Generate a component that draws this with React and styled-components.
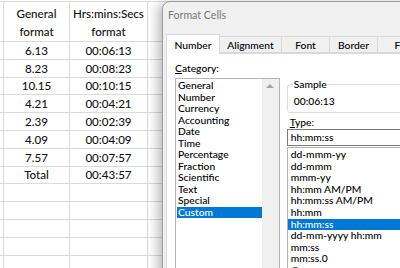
import React from "react";
import styled, { createGlobalStyle } from "styled-components";

const GlobalStyle = createGlobalStyle`
  html, body {
    margin: 0;
    padding: 0;
    background: #ffffff;
  }
  body {
    width: 400px;
    height: 268px;
    overflow: hidden;
  }
`;

const Stage = styled.div`
  position: relative;
  width: 400px;
  height: 268px;
  overflow: hidden;
  background: #ffffff;
`;

const Sheet = styled.div`
  display: grid;
  grid-template-columns: 4px 66px 78px 1fr;
  grid-template-rows: 40px repeat(13, 17.8px);
  margin-top: 1px;
  border-top: 1px solid #dadada;
  font-family: Lato, "Liberation Sans", sans-serif;
  font-size: 11.6px;
  font-weight: 500;
  color: #111;
`;

const Cell = styled.div`
  box-sizing: border-box;
  border-right: 1px solid #dadada;
  border-bottom: 1px solid #dadada;
  display: flex;
  align-items: ${(p) => (p.$header ? "flex-end" : "center")};
  justify-content: center;
  text-align: center;
  line-height: ${(p) => (p.$header ? "18px" : "normal")};
  white-space: nowrap;
`;

const Dialog = styled.div`
  position: absolute;
  left: 162px;
  top: 1px;
  width: 260px;
  height: 290px;
  box-sizing: border-box;
  border: 1px solid #9c9c9c;
  border-radius: 8px 0 0 0;
  background: #f0f0f0;
  box-shadow: -4px 2px 12px rgba(0, 0, 0, 0.28);
  display: flex;
  flex-direction: column;
  font-family: Lato, "Liberation Sans", sans-serif;
  font-weight: 500;
  color: #000;
`;

const TitleBar = styled.div`
  height: 32px;
  box-sizing: border-box;
  padding: 5px 0 0 5px;
  font-size: 10.6px;
  line-height: 16px;
  color: #777;
  font-weight: 400;
`;

const Tabs = styled.div`
  display: flex;
  align-items: flex-end;
  height: 19px;
  padding-left: 3px;
  position: relative;
  z-index: 1;
`;

const Tab = styled.div`
  box-sizing: border-box;
  flex: none;
  width: ${(p) => p.$w}px;
  height: ${(p) => (p.$active ? "20px" : "17px")};
  margin-bottom: ${(p) => (p.$active ? "-1px" : "0")};
  display: flex;
  align-items: center;
  justify-content: center;
  font-size: 10.3px;
  white-space: nowrap;
  background: ${(p) => (p.$active ? "#ffffff" : "#f0f0f0")};
  border: 1px solid #d9d9d9;
  border-bottom: ${(p) => (p.$active ? "none" : "1px solid #d9d9d9")};
  margin-left: ${(p) => (p.$first ? "0" : "-1px")};
`;

const Panel = styled.div`
  flex: 1;
  margin-left: 3px;
  border: 1px solid #d9d9d9;
  background: #ffffff;
  display: flex;
  gap: 7px;
  padding: 7px 0 0 8px;
  font-size: 10.3px;
`;

const CategoryCol = styled.div`
  width: 110px;
  display: flex;
  flex-direction: column;
`;

const TypeCol = styled.div`
  width: 140px;
  display: flex;
  flex-direction: column;
`;

const Label = styled.div`
  line-height: 14px;
  margin-top: ${(p) => p.$top || 0}px;
  margin-bottom: ${(p) => p.$gap || 0}px;
  padding-left: ${(p) => p.$indent || 0}px;
`;

const ListBox = styled.div`
  display: flex;
  height: 200px;
  box-sizing: border-box;
  border: 1px solid #b4b4b4;
  padding: 0 0 0 1px;
`;

const Items = styled.div`
  flex: 1;
  padding-top: 1px;
`;

const Item = styled.div`
  height: ${(p) => p.$h}px;
  line-height: ${(p) => p.$h}px;
  padding-left: ${(p) => p.$pad}px;
  white-space: nowrap;
  background: ${(p) => (p.$selected ? "#0078d7" : "transparent")};
  color: ${(p) => (p.$selected ? "#ffffff" : "#000")};
`;

const ScrollBar = styled.div`
  width: 17px;
  background: #f0f0f0;
  display: flex;
  justify-content: center;
  padding-top: 5px;
  box-sizing: border-box;
`;

const UpArrow = styled.div`
  width: 0;
  height: 0;
  border-left: 4px solid transparent;
  border-right: 4px solid transparent;
  border-bottom: 4px solid #a6a6a6;
`;

const Sample = styled.fieldset`
  margin: 17px 0 0 0;
  padding: 0 0 4px 6px;
  border: 1px solid #dcdcdc;
  border-radius: 3px;
  min-width: 0;
  height: 35px;
  box-sizing: border-box;
  & > legend {
    padding: 0 1px;
    margin-left: -1px;
    line-height: 12px;
  }
`;

const SampleValue = styled.div`
  line-height: 12px;
  margin-top: 5px;
`;

const TypeInput = styled.div`
  height: 17px;
  box-sizing: border-box;
  border: 1px solid #7a7a7a;
  padding-left: 3px;
  line-height: 15px;
`;

const TypeList = styled.div`
  margin-top: 1px;
  height: 140px;
  box-sizing: border-box;
  border: 1px solid #b4b4b4;
  border-right: none;
  padding-top: 1px;
`;

const rows = [
  ["6.13", "00:06:13"],
  ["8.23", "00:08:23"],
  ["10.15", "00:10:15"],
  ["4.21", "00:04:21"],
  ["2.39", "00:02:39"],
  ["4.09", "00:04:09"],
  ["7.57", "00:07:57"],
  ["Total", "00:43:57"],
  ["", ""],
  ["", ""],
  ["", ""],
  ["", ""],
  ["", ""],
];

const tabs = [
  ["Number", 54],
  ["Alignment", 63],
  ["Font", 49],
  ["Border", 49],
  ["Fill", 48],
];

const categories = [
  "General",
  "Number",
  "Currency",
  "Accounting",
  "Date",
  "Time",
  "Percentage",
  "Fraction",
  "Scientific",
  "Text",
  "Special",
  "Custom",
];

const types = [
  "dd-mmm-yy",
  "dd-mmm",
  "mmm-yy",
  "hh:mm AM/PM",
  "hh:mm:ss AM/PM",
  "hh:mm",
  "hh:mm:ss",
  "dd-mm-yyyy hh:mm",
  "mm:ss",
  "mm:ss.0",
  "@",
];

export default function App() {
  return (
    <>
      <GlobalStyle />
      <Stage>
        <Sheet>
          <Cell />
          <Cell $header>
            General
            <br />
            format
          </Cell>
          <Cell $header>
            Hrs:mins:Secs
            <br />
            format
          </Cell>
          <Cell />
          {rows.map((r, i) => (
            <React.Fragment key={i}>
              <Cell />
              <Cell>{r[0]}</Cell>
              <Cell>{r[1]}</Cell>
              <Cell />
            </React.Fragment>
          ))}
        </Sheet>

        <Dialog>
          <TitleBar>Format Cells</TitleBar>
          <Tabs>
            {tabs.map(([t, w], i) => (
              <Tab key={t} $w={w} $active={i === 0} $first={i === 0}>
                {t}
              </Tab>
            ))}
          </Tabs>
          <Panel>
            <CategoryCol>
              <Label $gap={3}>
                <u>C</u>ategory:
              </Label>
              <ListBox>
                <Items>
                  {categories.map((c) => (
                    <Item key={c} $h={11.5} $pad={1} $selected={c === "Custom"}>
                      {c}
                    </Item>
                  ))}
                </Items>
                <ScrollBar>
                  <UpArrow />
                </ScrollBar>
              </ListBox>
            </CategoryCol>
            <TypeCol>
              <Sample>
                <legend>Sample</legend>
                <SampleValue>00:06:13</SampleValue>
              </Sample>
              <Label $top={2} $gap={0} $indent={3}>
                <u>T</u>ype:
              </Label>
              <TypeInput>hh:mm:ss</TypeInput>
              <TypeList>
                {types.map((t) => (
                  <Item key={t} $h={11.6} $pad={3} $selected={t === "hh:mm:ss"}>
                    {t}
                  </Item>
                ))}
              </TypeList>
            </TypeCol>
          </Panel>
        </Dialog>
      </Stage>
    </>
  );
}
